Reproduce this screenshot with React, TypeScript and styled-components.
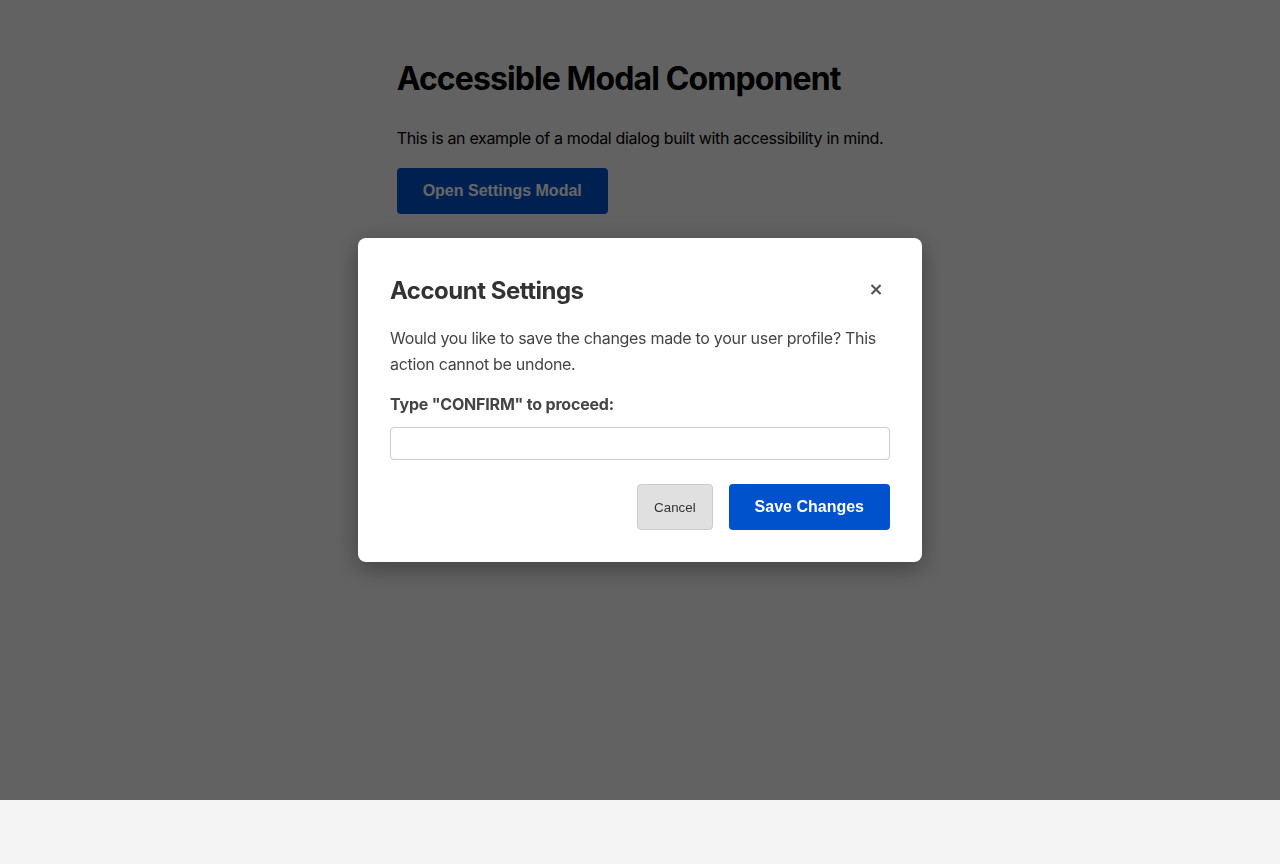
import React, { useState } from 'react';
import styled, { createGlobalStyle } from 'styled-components';

const GlobalStyle = createGlobalStyle`
  html, body {
    margin: 0;
    padding: 0;
    background: #f4f4f4;
  }
  body {
    font-family: Inter, 'Noto Sans', 'Liberation Sans', sans-serif;
    color: #000;
  }
`;

const Page = styled.main`
  display: flex;
  justify-content: center;
  padding-top: 60px;
  height: 804px;
  box-sizing: border-box;
`;

const Content = styled.div`
  width: fit-content;
`;

const PageTitle = styled.h1`
  font-size: 32px;
  line-height: 1.2;
  font-weight: 700;
  margin: 0 0 30px;
  letter-spacing: -0.9px;
`;

const Intro = styled.p`
  font-size: 16px;
  line-height: 20px;
  margin: 0 0 20px;
  letter-spacing: -0.33px;
`;

const PrimaryButton = styled.button`
  font-family: 'Liberation Sans', Arial, sans-serif;
  font-size: 16px;
  font-weight: 700;
  line-height: 18px;
  color: #fff;
  background: #0052cc;
  border: none;
  border-radius: 4px;
  padding: 14px 26px;
  cursor: pointer;
`;

const SecondaryButton = styled.button`
  font-family: 'Liberation Sans', Arial, sans-serif;
  font-size: 13.33px;
  color: #333;
  background: #e0e0e0;
  border: 1px solid #ccc;
  border-radius: 4px;
  padding: 0 16px;
  cursor: pointer;
`;

const Overlay = styled.div`
  position: fixed;
  top: 0;
  left: 0;
  width: 100%;
  height: 800px;
  background: rgba(0, 0, 0, 0.6);
  display: flex;
  align-items: center;
  justify-content: center;
`;

const Dialog = styled.div`
  background: #fff;
  width: 500px;
  padding: 32px;
  border-radius: 8px;
  box-shadow: 0 6px 24px rgba(0, 0, 0, 0.35);
`;

const Header = styled.div`
  display: flex;
  align-items: center;
  justify-content: space-between;
  height: 40px;
`;

const DialogTitle = styled.h2`
  margin: 0;
  font-size: 24px;
  font-weight: 700;
  color: #333;
  letter-spacing: -0.5px;
`;

const CloseButton = styled.button`
  width: 32px;
  height: 40px;
  border: none;
  background: none;
  color: #555;
  font-family: 'DejaVu Sans', sans-serif;
  font-size: 18px;
  font-weight: 700;
  padding: 0 0 4px 4px;
  cursor: pointer;
`;

const Body = styled.p`
  margin: 15px 0 0;
  font-size: 16px;
  line-height: 26px;
  color: #444;
  letter-spacing: -0.3px;
`;

const Label = styled.label`
  display: block;
  margin: 17px 0 13px;
  font-size: 16px;
  line-height: 20px;
  font-weight: 700;
  color: #444;
  letter-spacing: -0.2px;
`;

const TextInput = styled.input`
  display: block;
  width: 100%;
  box-sizing: border-box;
  height: 33px;
  border: 1px solid #ccc;
  border-radius: 4px;
  padding: 6px 8px;
  font-size: 16px;
  font-family: inherit;
  outline: none;
`;

const Actions = styled.div`
  display: flex;
  justify-content: flex-end;
  gap: 16px;
  margin-top: 24px;
`;

export default function App() {
  const [value, setValue] = useState('');

  return (
    <>
      <GlobalStyle />
      <Page aria-hidden="true">
        <Content>
          <PageTitle>Accessible Modal Component</PageTitle>
          <Intro>This is an example of a modal dialog built with accessibility in mind.</Intro>
          <PrimaryButton>Open Settings Modal</PrimaryButton>
        </Content>
      </Page>
      <Overlay>
        <Dialog role="dialog" aria-modal="true" aria-labelledby="dialog-title">
          <Header>
            <DialogTitle id="dialog-title">Account Settings</DialogTitle>
            <CloseButton aria-label="Close dialog">×</CloseButton>
          </Header>
          <Body>
            Would you like to save the changes made to your user profile? This action cannot be
            undone.
          </Body>
          <Label htmlFor="confirm-input">Type "CONFIRM" to proceed:</Label>
          <TextInput
            id="confirm-input"
            value={value}
            onChange={(e) => setValue(e.target.value)}
          />
          <Actions>
            <SecondaryButton>Cancel</SecondaryButton>
            <PrimaryButton>Save Changes</PrimaryButton>
          </Actions>
        </Dialog>
      </Overlay>
    </>
  );
}
